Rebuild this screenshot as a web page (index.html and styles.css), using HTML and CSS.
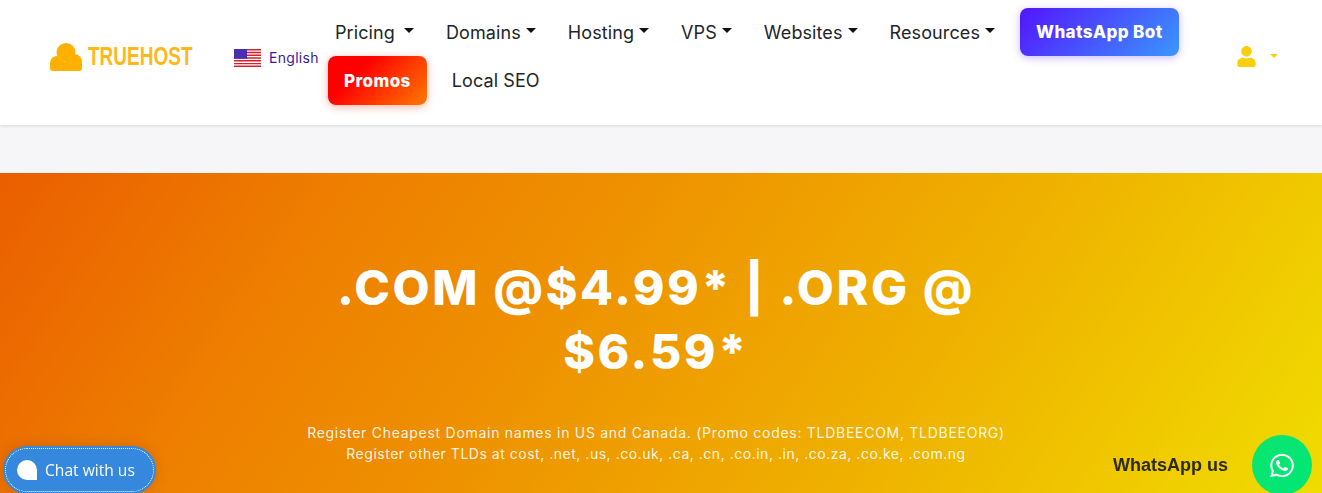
FILE: index.html
```html
<!DOCTYPE html>
<html lang="en">
<head>
    <meta charset="UTF-8">
    <meta name="viewport" content="width=device-width, initial-scale=1.0">
    <title>Truehost</title>
    <link rel="stylesheet" href="styles.css">
</head>
<body>
    <header class="topbar">
        <a class="logo" href="#">
            <svg class="logo-cloud" viewBox="0 0 32 28" width="32" height="28">
                <g fill="#ffb000">
                    <circle cx="16" cy="9.500" r="9.500"/>
                    <circle cx="7" cy="20" r="7"/>
                    <circle cx="24" cy="19" r="8"/>
                    <rect x="0" y="19" width="32" height="9" rx="3"/>
                </g>
            </svg>
            <span class="logo-text">TRUEHOST</span>
        </a>
        <a class="lang" href="#">
            <svg class="flag" viewBox="0 0 27 18" width="27" height="18">
                <rect width="27" height="18" fill="#fff"/>
                <path d="M0 0h27v1.400H0zM0 2.800h27v1.400H0zM0 5.600h27V7H0zM0 8.300h27v1.400H0zM0 11.100h27v1.400H0zM0 13.900h27v1.400H0zM0 16.600h27V18H0z" fill="#d8202c"/>
                <rect width="13" height="9.700" fill="#4a2fb0"/>
            </svg>
            <span>English</span>
        </a>
        <nav class="main-nav">
            <a class="nav-item" href="#">Pricing <span class="caret caret-spaced"></span></a>
            <a class="nav-item" href="#">Domains<span class="caret"></span></a>
            <a class="nav-item" href="#">Hosting<span class="caret"></span></a>
            <a class="nav-item" href="#">VPS<span class="caret"></span></a>
            <a class="nav-item" href="#">Websites<span class="caret"></span></a>
            <a class="nav-item" href="#">Resources<span class="caret"></span></a>
            <a class="nav-btn btn-bot" href="#">WhatsApp Bot</a>
            <a class="nav-btn btn-promos" href="#">Promos</a>
            <a class="nav-item" href="#">Local SEO</a>
        </nav>
        <a class="account" href="#">
            <svg viewBox="0 0 448 512" width="19" height="21">
                <path d="M224 256c70.700 0 128-57.300 128-128S294.700 0 224 0 96 57.300 96 128s57.300 128 128 128zm89.600 32h-16.700c-22.200 10.200-46.900 16-72.900 16s-50.600-5.800-72.900-16h-16.700C60.200 288 0 348.200 0 422.400V464c0 26.500 21.500 48 48 48h352c26.500 0 48-21.500 48-48v-41.600c0-74.200-60.200-134.400-134.400-134.400z" fill="#fbcf0c"/>
            </svg>
            <span class="account-caret"></span>
        </a>
    </header>

    <section class="hero">
        <h1>.COM @$4.99* | .ORG @<br>$6.59*</h1>
        <p>Register Cheapest Domain names in US and Canada. (Promo codes: TLDBEECOM, TLDBEEORG)</p>
        <p class="hero-sub">Register other TLDs at cost, .net, .us, .co.uk, .ca, .cn, .co.in, .in, .co.za, .co.ke, .com.ng</p>
    </section>

    <a class="chat-widget" href="#">
        <span class="chat-inner">
            <span class="chat-bubble"></span>
            <span>Chat with us</span>
        </span>
    </a>

    <a class="wa-widget" href="#">
        <span class="wa-label">WhatsApp us</span>
        <span class="wa-circle">
            <svg viewBox="0 0 448 512" width="24" height="27">
                <path d="M380.900 97.100C339 55.100 283.200 32 223.900 32c-122.400 0-222 99.600-222 222 0 39.100 10.200 77.300 29.600 111L0 480l117.700-30.900c32.400 17.700 68.900 27 106.100 27h.1c122.300 0 224.100-99.600 224.100-222 0-59.300-25.200-115-67.100-157zm-157 341.600c-33.200 0-65.700-8.900-94-25.700l-6.700-4-69.800 18.300L72 359.200l-4.400-7c-18.500-29.400-28.200-63.300-28.200-98.200 0-101.700 82.800-184.500 184.600-184.500 49.300 0 95.600 19.200 130.400 54.100 34.800 34.900 56.200 81.200 56.100 130.500 0 101.800-84.900 184.600-186.600 184.600zm101.200-138.200c-5.500-2.800-32.800-16.200-37.900-18-5.100-1.900-8.800-2.800-12.500 2.800-3.700 5.600-14.300 18-17.600 21.800-3.200 3.700-6.500 4.200-12 1.400-32.600-16.300-54-29.100-75.500-66-5.700-9.800 5.700-9.100 16.300-30.300 1.800-3.700.9-6.900-.5-9.700-1.400-2.800-12.500-30.100-17.100-41.200-4.500-10.800-9.100-9.300-12.500-9.500-3.200-.2-6.900-.2-10.600-.2-3.700 0-9.700 1.400-14.800 6.900-5.100 5.600-19.400 19-19.400 46.300 0 27.300 19.900 53.700 22.600 57.400 2.800 3.700 39.100 59.700 94.800 83.800 35.200 15.200 49 16.500 66.600 13.900 10.700-1.600 32.800-13.400 37.400-26.400 4.600-13 4.600-24.100 3.200-26.400-1.300-2.500-5-3.900-10.500-6.600z" fill="#fff"/>
            </svg>
        </span>
    </a>
</body>
</html>
```

FILE: styles.css
```css
html, body {
    height: 100%;
}

body {
    margin: 0;
    overflow: hidden;
    font-family: Inter, "Open Sans", sans-serif;
    background-color: #f6f6f9;
    color: #212529;
}

a {
    text-decoration: none;
    color: inherit;
}

.topbar {
    display: flex;
    align-items: center;
    height: 125px;
    box-sizing: border-box;
    background: #fff;
    box-shadow: 0 1px 3px rgba(0, 0, 0, 0.12);
}

.logo {
    display: flex;
    align-items: center;
    gap: 6px;
    margin-left: 50px;
    width: 184px;
    margin-top: -12px;
}

.logo-text {
    font-family: "Liberation Sans", sans-serif;
    font-size: 25px;
    font-weight: 700;
    color: #ffb81c;
    transform: scaleX(0.76);
    transform-origin: left center;
}

.lang {
    display: flex;
    align-items: center;
    gap: 8px;
    width: 85px;
    margin-top: -10px;
    font-size: 14px;
    letter-spacing: 0.3px;
    color: #3c1a9c;
}

.main-nav {
    display: flex;
    flex-wrap: wrap;
    align-items: center;
    align-content: flex-start;
    width: 885px;
    height: 125px;
    box-sizing: border-box;
    padding-top: 8px;
}

.nav-item {
    display: flex;
    align-items: center;
    height: 48px;
    padding: 0 16px;
    font-size: 18px;
    letter-spacing: 0.1px;
    color: #212529;
}

.caret {
    width: 0;
    height: 0;
    margin-left: 5px;
    margin-top: -3px;
    border-top: 5px solid #111;
    border-left: 5px solid transparent;
    border-right: 5px solid transparent;
}

.caret-spaced {
    margin-left: 9px;
}

.nav-btn {
    display: flex;
    align-items: center;
    height: 48px;
    margin: 0 9px;
    padding: 0 16px;
    border-radius: 8px;
    font-size: 17px;
    font-weight: 800;
    letter-spacing: 0.4px;
    color: #fff;
}

.btn-bot {
    background: linear-gradient(135deg, #5314ff, #3a97ff);
    box-shadow: 0 2px 8px rgba(83, 40, 255, 0.3);
}

.btn-promos {
    height: 49px;
    background: linear-gradient(135deg, #ff0000 30%, #ff7a00);
    box-shadow: 0 2px 8px rgba(255, 40, 0, 0.35);
}

.account {
    display: flex;
    align-items: center;
    gap: 14px;
    margin-left: 33px;
    margin-top: -13px;
}

.account-caret {
    width: 0;
    height: 0;
    border-top: 4px solid #fbcf0c;
    border-left: 4px solid transparent;
    border-right: 4px solid transparent;
}

.hero {
    height: 320px;
    margin-top: 48px;
    box-sizing: border-box;
    padding-top: 83px;
    text-align: center;
    color: #fff;
    background: linear-gradient(124deg, #ea5e00 0%, #ee8000 24%, #ee8f00 40%, #efb000 68%, #f0dc00 100%);
}

.hero h1 {
    margin: 0;
    padding-right: 10px;
    font-size: 48px;
    font-weight: 800;
    letter-spacing: 2.6px;
    line-height: 64px;
}

.hero p {
    margin: 38px 10px 0 0;
    font-size: 14px;
    letter-spacing: 0.72px;
    line-height: 21px;
    color: rgba(255, 255, 255, 0.9);
}

.hero .hero-sub {
    margin-top: 0;
    letter-spacing: 0.52px;
}

.chat-widget {
    position: fixed;
    left: 3px;
    bottom: -1px;
    display: block;
    padding: 2px;
    border-radius: 25px;
    background: #3588de;
    box-shadow: 0 0 12px rgba(120, 60, 0, 0.25);
}

.chat-inner {
    display: flex;
    align-items: center;
    gap: 8px;
    height: 42px;
    padding: 0 18px 0 11px;
    border: 1px dotted #fff;
    border-radius: 23px;
    font-family: "Open Sans", sans-serif;
    font-size: 15.6px;
    color: #fff;
}

.chat-bubble {
    width: 20px;
    height: 20px;
    border-radius: 50% 50% 0 50%;
    background: #fff;
}

.wa-widget {
    position: fixed;
    right: 10px;
    bottom: -2px;
    display: flex;
    align-items: center;
    gap: 24px;
}

.wa-label {
    font-family: "Liberation Sans", Arial, sans-serif;
    font-size: 18px;
    font-weight: 700;
    color: #2e2a12;
}

.wa-circle {
    display: flex;
    align-items: center;
    justify-content: center;
    width: 60px;
    height: 60px;
    border-radius: 50%;
    background: linear-gradient(135deg, #0be56f, #00e676);
}
```
